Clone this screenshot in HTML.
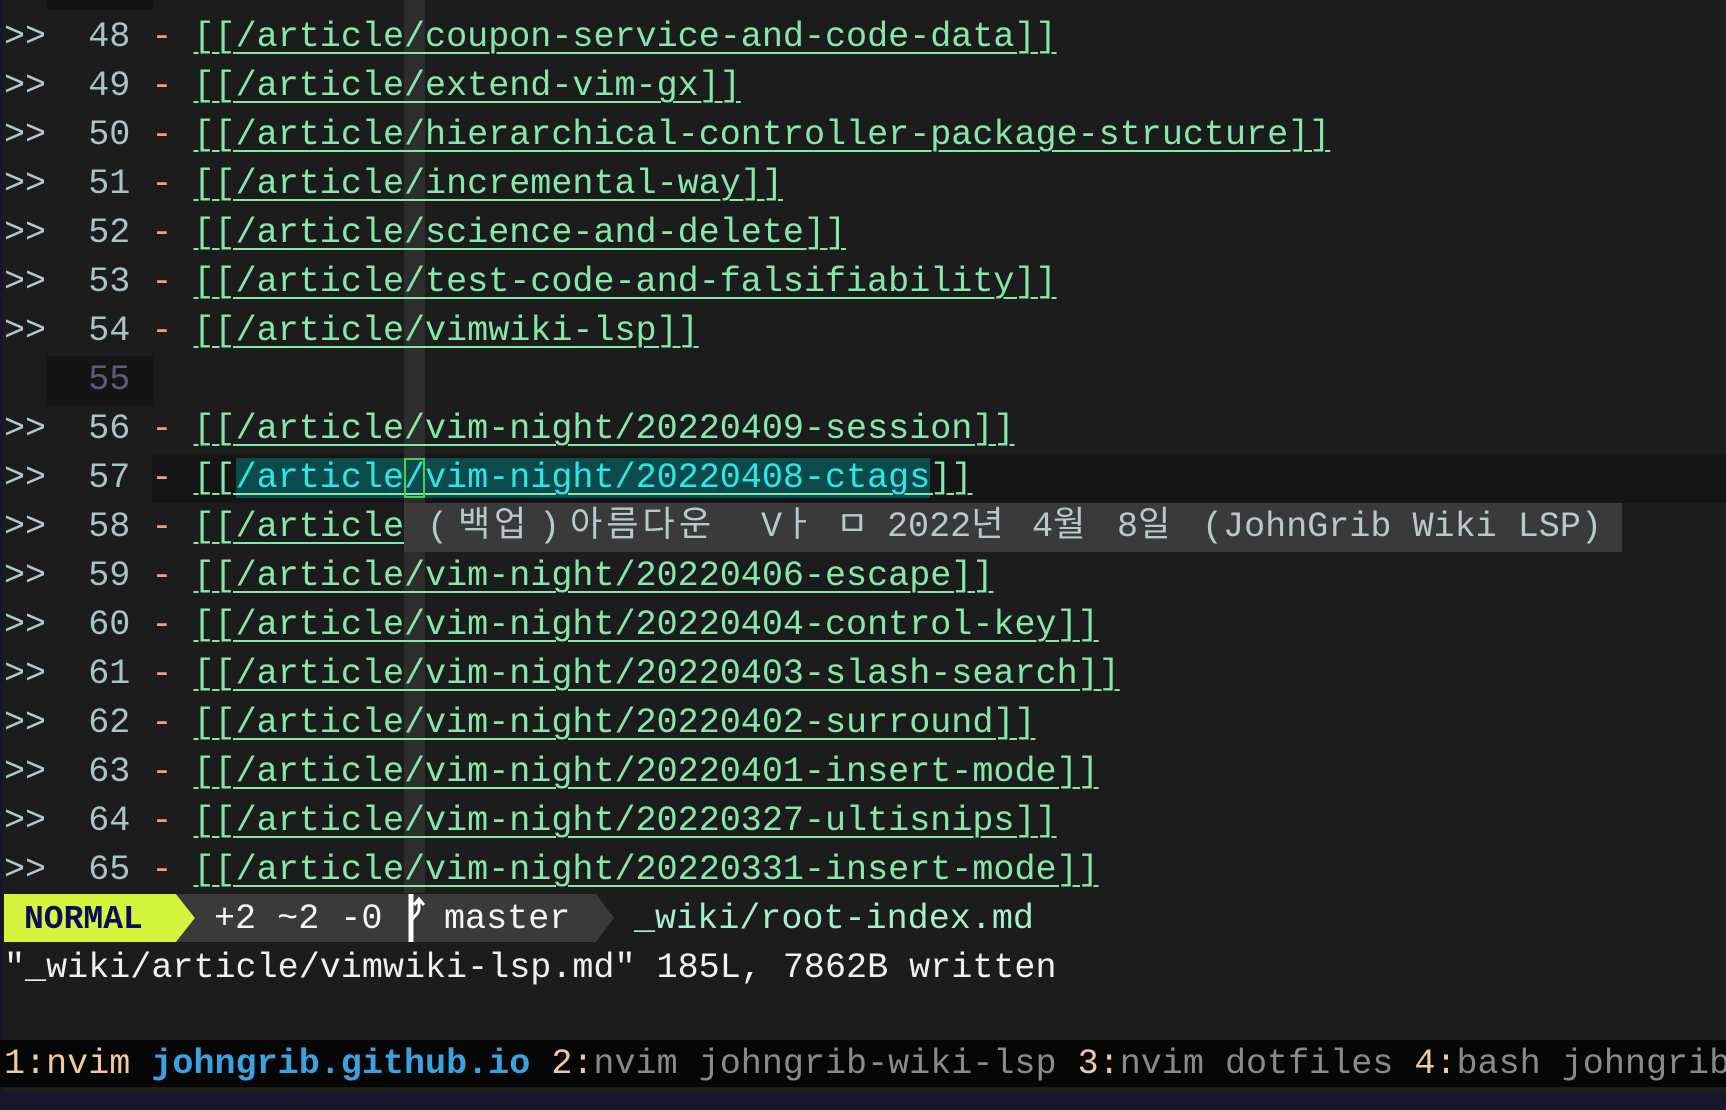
<!DOCTYPE html>
<html><head><meta charset="utf-8"><style>
html,body{margin:0;padding:0;}
body{width:1726px;height:1110px;background:#16152a;position:relative;overflow:hidden;font-family:"Liberation Mono","Noto Sans CJK KR",monospace;font-size:35.1px;}
#ed{position:absolute;left:3px;top:0;width:1723px;height:1092px;background:#1c1c1c;}
.row{position:absolute;left:4px;height:49px;line-height:49px;white-space:pre;color:#b0c8d0;}
.n{color:#a9c3c6}
.d{color:#f2a27e}
.l{color:#86e8a8;text-decoration:underline;text-decoration-thickness:2px;text-underline-offset:6px}
.hl{background:#0b4b4b;color:#2ee6e6}
#cc{position:absolute;left:404px;top:0;width:21px;height:893px;background:#2d2d2d;}
.gb{position:absolute;left:47px;width:106px;background:#141414;}
.pp{position:absolute;top:503px;height:49px;line-height:49px;white-space:pre;color:#b8c8cc;}
</style></head><body>
<div id="ed"></div>
<div id="cc"></div>
<div class="gb" style="top:0;height:10px"></div>
<div class="gb" style="top:356px;height:49px"></div>
<div style="position:absolute;left:152px;top:454px;width:1575px;height:49px;background:#151515"></div>
<div style="position:absolute;left:404px;top:454px;width:21px;height:49px;background:#2d2d2d"></div>

<div class="row" style="top:13px">&gt;&gt;  <span class="n">48</span> <span class="d">-</span> <span class="l">[[/article/coupon-service-and-code-data]]</span></div>
<div class="row" style="top:62px">&gt;&gt;  <span class="n">49</span> <span class="d">-</span> <span class="l">[[/article/extend-vim-gx]]</span></div>
<div class="row" style="top:111px">&gt;&gt;  <span class="n">50</span> <span class="d">-</span> <span class="l">[[/article/hierarchical-controller-package-structure]]</span></div>
<div class="row" style="top:160px">&gt;&gt;  <span class="n">51</span> <span class="d">-</span> <span class="l">[[/article/incremental-way]]</span></div>
<div class="row" style="top:209px">&gt;&gt;  <span class="n">52</span> <span class="d">-</span> <span class="l">[[/article/science-and-delete]]</span></div>
<div class="row" style="top:258px">&gt;&gt;  <span class="n">53</span> <span class="d">-</span> <span class="l">[[/article/test-code-and-falsifiability]]</span></div>
<div class="row" style="top:307px">&gt;&gt;  <span class="n">54</span> <span class="d">-</span> <span class="l">[[/article/vimwiki-lsp]]</span></div>
<div class="row" style="top:356px">    <span style="color:#5e5a7c">55</span></div>
<div class="row" style="top:405px">&gt;&gt;  <span class="n">56</span> <span class="d">-</span> <span class="l">[[/article/vim-night/20220409-session]]</span></div>
<div class="row" style="top:454px">&gt;&gt;  <span class="n">57</span> <span class="d">-</span> <span class="l">[[<span class="hl">/article<span style="outline:2px solid #4ad04a;outline-offset:-2px">/</span>vim-night/20220408-ctags</span>]]</span></div>
<div class="row" style="top:503px">&gt;&gt;  <span class="n">58</span> <span class="d">-</span> <span class="l">[[/article</span></div>
<div style="position:absolute;left:404px;top:503px;width:1218px;height:49px;background:#3a3a3a;"></div>
<div class="pp" style="left:427px">(</div>
<div class="pp" style="left:458px">백</div>
<div class="pp" style="left:494px">업</div>
<div class="pp" style="left:539px">)</div>
<div class="pp" style="left:570px;letter-spacing:4px">아름다운</div>
<div class="pp" style="left:761px">Vㅏ</div>
<div class="pp" style="left:836px">ㅁ</div>
<div class="pp" style="left:887px">2022년</div>
<div class="pp" style="left:1032px">4월</div>
<div class="pp" style="left:1117px">8일</div>
<div class="pp" style="left:1202px">(JohnGrib Wiki LSP)</div>
<div class="row" style="top:552px">&gt;&gt;  <span class="n">59</span> <span class="d">-</span> <span class="l">[[/article/vim-night/20220406-escape]]</span></div>
<div class="row" style="top:601px">&gt;&gt;  <span class="n">60</span> <span class="d">-</span> <span class="l">[[/article/vim-night/20220404-control-key]]</span></div>
<div class="row" style="top:650px">&gt;&gt;  <span class="n">61</span> <span class="d">-</span> <span class="l">[[/article/vim-night/20220403-slash-search]]</span></div>
<div class="row" style="top:699px">&gt;&gt;  <span class="n">62</span> <span class="d">-</span> <span class="l">[[/article/vim-night/20220402-surround]]</span></div>
<div class="row" style="top:748px">&gt;&gt;  <span class="n">63</span> <span class="d">-</span> <span class="l">[[/article/vim-night/20220401-insert-mode]]</span></div>
<div class="row" style="top:797px">&gt;&gt;  <span class="n">64</span> <span class="d">-</span> <span class="l">[[/article/vim-night/20220327-ultisnips]]</span></div>
<div class="row" style="top:846px">&gt;&gt;  <span class="n">65</span> <span class="d">-</span> <span class="l">[[/article/vim-night/20220331-insert-mode]]</span></div>

<svg style="position:absolute;left:0;top:894px" width="700" height="48">
<polygon points="4,0 176,0 195,24 176,48 4,48" fill="#d4f53c"/>
<polygon points="176,0 596,0 614,24 596,48 176,48 195,24" fill="#3a3a3a"/>
<path d="M411 0 V48" stroke="#fff" stroke-width="5"/>
<path d="M411 30 C411 22 419 22 419 14 V6 M414 11 L419 5 L424 11" stroke="#fff" stroke-width="3" fill="none"/>
</svg>
<div class="row" style="top:895px;left:24px;color:#0c0c5c;font-weight:bold;font-size:33px;">NORMAL</div>
<div class="row" style="top:895px;left:214px;color:#f4f4f4">+2 ~2 -0</div>
<div class="row" style="top:895px;left:444px;color:#f4f4f4">master</div>
<div class="row" style="top:895px;left:634px;color:#a6f0cc">_wiki/root-index.md</div>
<div class="row" style="top:944px;left:4px;color:#f0f0f0">"_wiki/article/vimwiki-lsp.md" 185L, 7862B written</div>

<div style="position:absolute;left:0;top:1040px;width:1726px;height:47px;background:#060606"></div>
<div class="row" style="top:1041px;left:4px;height:47px;line-height:47px"><span style="color:#f0c9a0">1:nvim </span><b style="color:#3ba2e0">johngrib.github.io</b><span style="color:#f0c9a0"> 2:</span><span style="color:#8a8a8a">nvim johngrib-wiki-lsp</span><span style="color:#f0c9a0"> 3:</span><span style="color:#8a8a8a">nvim dotfiles</span><span style="color:#f0c9a0"> 4:</span><span style="color:#8a8a8a">bash johngrib</span></div>
</body></html>
